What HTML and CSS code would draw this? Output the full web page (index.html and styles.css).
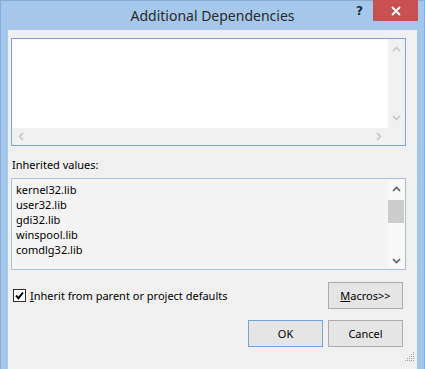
FILE: index.html
```html
<!DOCTYPE html>
<html>
<head>
<meta charset="utf-8">
<link rel="stylesheet" href="styles.css">
</head>
<body>
<div class="window">
  <div class="titlebar">
    <div></div>
    <div class="title">Additional Dependencies</div>
    <div class="controls">
      <span class="help">?</span>
      <span class="close">
        <svg width="10" height="10" viewBox="0 0 10 10"><path d="M1 1 L9 9 M9 1 L1 9" stroke="#fff" stroke-width="1.8" fill="none"/></svg>
      </span>
    </div>
  </div>
  <div class="client">
    <div class="editbox">
      <div class="edit-main">
        <div class="edit-area"></div>
        <div class="vscroll disabled">
          <svg width="9" height="6" viewBox="0 0 9 6"><path d="M1 5 L4.5 1.5 L8 5" stroke="#c4c4c4" stroke-width="1.5" fill="none"/></svg>
          <svg width="9" height="6" viewBox="0 0 9 6"><path d="M1 1 L4.5 4.5 L8 1" stroke="#c4c4c4" stroke-width="1.5" fill="none"/></svg>
        </div>
      </div>
      <div class="hscroll">
        <svg width="6" height="9" viewBox="0 0 6 9"><path d="M5 1 L1.5 4.5 L5 8" stroke="#c4c4c4" stroke-width="1.5" fill="none"/></svg>
        <svg width="6" height="9" viewBox="0 0 6 9"><path d="M1 1 L4.5 4.5 L1 8" stroke="#c4c4c4" stroke-width="1.5" fill="none"/></svg>
        <div class="corner"></div>
      </div>
    </div>
    <div class="label">Inherited values:</div>
    <div class="listbox">
      <div class="list-items">
        <div>kernel32.lib</div>
        <div>user32.lib</div>
        <div>gdi32.lib</div>
        <div>winspool.lib</div>
        <div>comdlg32.lib</div>
      </div>
      <div class="vscroll enabled">
        <svg width="9" height="6" viewBox="0 0 9 6"><path d="M1 5 L4.5 1.5 L8 5" stroke="#606060" stroke-width="1.6" fill="none"/></svg>
        <div class="track"><div class="thumb"></div></div>
        <svg width="9" height="6" viewBox="0 0 9 6"><path d="M1 1 L4.5 4.5 L8 1" stroke="#606060" stroke-width="1.6" fill="none"/></svg>
      </div>
    </div>
    <div class="row">
      <label class="check">
        <span class="box"><svg width="11" height="11" viewBox="0 0 11 11"><path d="M2 5.5 L4.5 8.2 L9 2.5" stroke="#000" stroke-width="2" fill="none"/></svg></span>
        <span><u>I</u>nherit from parent or project defaults</span>
      </label>
      <button class="btn"><u>M</u>acros&gt;&gt;</button>
    </div>
    <div class="buttons">
      <button class="btn default">OK</button>
      <button class="btn">Cancel</button>
    </div>
    <div class="grip">
      <svg width="12" height="12" viewBox="0 0 12 12"><g fill="#a0a0a0"><rect x="9" y="1" width="1" height="1"/><rect x="7" y="3" width="1" height="1"/><rect x="9" y="3" width="1" height="1"/><rect x="5" y="5" width="1" height="1"/><rect x="7" y="5" width="1" height="1"/><rect x="9" y="5" width="1" height="1"/><rect x="3" y="7" width="1" height="1"/><rect x="5" y="7" width="1" height="1"/><rect x="7" y="7" width="1" height="1"/><rect x="9" y="7" width="1" height="1"/><rect x="1" y="9" width="1" height="1"/><rect x="3" y="9" width="1" height="1"/><rect x="5" y="9" width="1" height="1"/><rect x="7" y="9" width="1" height="1"/><rect x="9" y="9" width="1" height="1"/></g></svg>
    </div>
  </div>
</div>
</body>
</html>
```
FILE: styles.css
```css
* { box-sizing: border-box; }
html, body { margin: 0; padding: 0; }
body {
  width: 425px;
  height: 369px;
  overflow: hidden;
  font-family: "Noto Sans", "Open Sans", sans-serif;
  font-size: 11px;
  color: #000;
}
.window {
  width: 425px;
  height: 374px;
  background: #a5c8ea;
  border: 1px solid #86aed8;
  display: flex;
  flex-direction: column;
}
.titlebar {
  height: 29px;
  display: grid;
  grid-template-columns: 1fr auto 1fr;
  align-items: start;
}
.title {
  font-size: 14px;
  color: #2a2a2a;
  padding-top: 5px;
  line-height: 20px;
}
.controls {
  justify-self: end;
  display: flex;
  align-items: flex-start;
  margin-top: -1px;
  margin-right: 6px;
}
.help {
  font-family: "DejaVu Sans", sans-serif;
  font-weight: bold;
  font-size: 12px;
  color: #1e2a3a;
  padding-top: 4px;
  margin-right: 10px;
}
.close {
  width: 45px;
  height: 21px;
  background: #c75050;
  display: flex;
  align-items: center;
  justify-content: center;
}
.client {
  flex: 1;
  margin: 0 7px 0 7px;
  background: #f0f0f0;
  padding: 8px 11px 0 3px;
  display: flex;
  flex-direction: column;
}
.editbox {
  height: 108px;
  border: 1px solid #7ea4cf;
  background: #fff;
  display: flex;
  flex-direction: column;
}
.edit-main {
  flex: 1;
  display: flex;
}
.edit-area { flex: 1; }
.vscroll {
  width: 17px;
  display: flex;
  flex-direction: column;
  align-items: center;
  justify-content: space-between;
}
.vscroll.disabled {
  background: #f0f0f0;
  padding: 7px 0 7px 0;
}
.hscroll {
  height: 17px;
  background: #f0f0f0;
  display: flex;
  align-items: center;
  padding-left: 6px;
}
.hscroll svg:nth-child(2) { margin-left: auto; margin-right: 6px; }
.corner { width: 17px; height: 17px; background: #f0f0f0; }
.label {
  margin-top: 11px;
  line-height: 16px;
  padding-left: 1px;
  color: #000;
}
.listbox {
  margin-top: 5px;
  height: 92px;
  border: 1px solid #a9c0dc;
  background: #f4f4f4;
  display: flex;
}
.list-items {
  flex: 1;
  padding: 3px 0 0 4px;
  line-height: 15px;
}
.vscroll.enabled {
  background: #f8f8f8;
  padding: 7px 1px 5px 0;
}
.track {
  flex: 1;
  width: 100%;
  padding-top: 8px;
}
.thumb {
  width: 16px;
  height: 23px;
  background: #cdcdcd;
}
.row {
  margin-top: 12px;
  height: 27px;
  display: flex;
  align-items: center;
  justify-content: space-between;
  padding-right: 3px;
}
.check {
  display: flex;
  align-items: center;
  padding-left: 2px;
  gap: 4px;
}
.box {
  width: 13px;
  height: 13px;
  border: 1px solid #333;
  background: #fff;
  display: flex;
  align-items: center;
  justify-content: center;
}
.btn {
  font-family: inherit;
  font-size: 11px;
  color: #000;
  width: 75px;
  height: 27px;
  background: #e5e5e5;
  border: 1px solid #acacac;
  padding: 0;
  margin: 0;
}
.btn.default {
  border-color: #6fa5dd;
}
.buttons {
  margin-top: 11px;
  display: flex;
  justify-content: flex-end;
  gap: 5px;
  padding-right: 3px;
}
.grip {
  display: flex;
  justify-content: flex-end;
  margin-top: 4px;
  margin-right: -10px;
}
```
